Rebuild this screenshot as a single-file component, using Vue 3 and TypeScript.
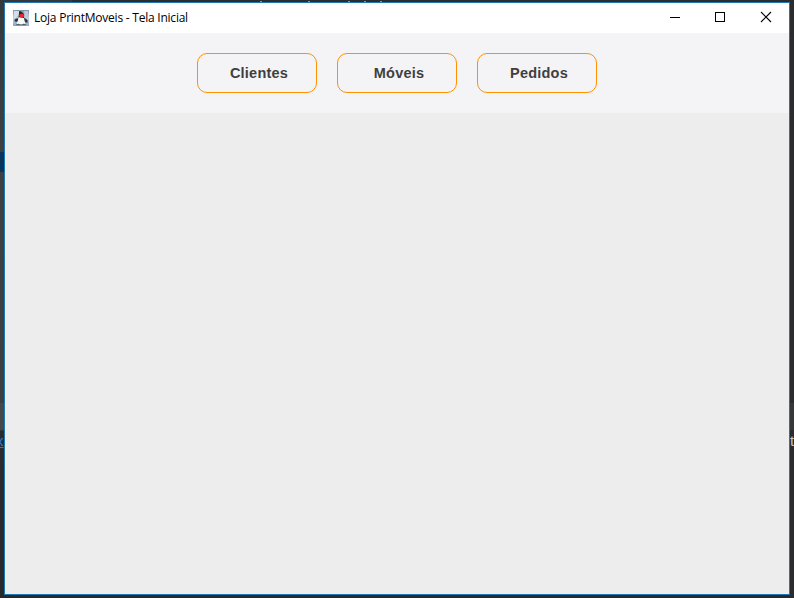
<script setup lang="ts">
import { ref } from 'vue'

const title = 'Loja PrintMoveis - Tela Inicial'
const sections: string[] = ['Clientes', 'Móveis', 'Pedidos']
const active = ref<string | null>(null)
const specks: number[] = [260, 308, 348, 364, 380]
</script>

<template>
  <div class="desktop">
    <i class="strip strip-top-left"></i>
    <i class="strip strip-selected"></i>
    <i class="strip strip-left-bar"></i>
    <i class="strip strip-right-bar"></i>
    <i v-for="x in specks" :key="x" class="speck" :style="{ left: x + 'px' }"></i>
    <span class="behind behind-left">x</span>
    <span class="behind behind-right">t</span>

    <div class="window">
      <header class="titlebar">
        <svg class="app-icon" width="16" height="16" viewBox="0 0 16 16">
          <defs>
            <linearGradient id="tile" x1="0" y1="0" x2="0" y2="1">
              <stop offset="0" stop-color="#7d95a7" />
              <stop offset="0.5" stop-color="#c2d2e0" />
              <stop offset="1" stop-color="#8ba6c0" />
            </linearGradient>
          </defs>
          <rect width="16" height="16" fill="url(#tile)" />
          <path d="M1 1H6V5L2 8H1Z" fill="#d5dee6" />
          <path d="M11 1H15V8L12 7Z" fill="#bccbd8" />
          <path d="M6.2 1L8.2 1.4L10.8 3.8L11.2 8L5.4 8.6L5.8 5Z" fill="#25282b" />
          <path d="M1.6 9.4L3.4 8.6L5.4 8.2L5 11L3.2 12L1.6 11.2ZM10.8 8L13 8.8L14.6 10.4V12.4H12L11 11Z" fill="#303438" />
          <path d="M5.6 7.3L8 7.6L10.8 8L11.8 11.6L12.6 13.8L10.5 13.8L8 14.6L5.5 13.8L3.7 14L4.8 11Z" fill="#f8f9f9" />
          <path d="M3 14.6L5.5 13.8L8 14.8L10.5 13.8L13.3 14.4L13 15.3H3Z" fill="#56616a" />
          <ellipse cx="8.7" cy="5.6" rx="2.5" ry="1.9" fill="#f0252c" />
        </svg>
        <h1 class="title">{{ title }}</h1>
        <div class="controls">
          <button class="control" aria-label="Minimizar">
            <svg width="12" height="12" shape-rendering="crispEdges"><path d="M1 6.5H11" stroke="#000" /></svg>
          </button>
          <button class="control" aria-label="Maximizar">
            <svg width="12" height="12" shape-rendering="crispEdges"><rect x="1.5" y="1.5" width="9" height="9" fill="none" stroke="#000" /></svg>
          </button>
          <button class="control control-close" aria-label="Fechar">
            <svg width="12" height="12"><path d="M1 1L11 11M11 1L1 11" stroke="#000" stroke-width="1.1" /></svg>
          </button>
        </div>
      </header>
      <nav class="menu">
        <button v-for="name in sections" :key="name" class="menu-button" @click="active = name">
          {{ name }}
        </button>
      </nav>
      <main class="content"></main>
    </div>
  </div>
</template>

<style>
body {
  overflow: hidden;
}
</style>

<style scoped>
.desktop {
  position: relative;
  box-sizing: border-box;
  width: 794px;
  height: 598px;
  padding: 2px 4px 3px;
  background: linear-gradient(#36393c 0, #3c4043 150px, #3b3f42 430px, #292b2d 431px, #27292b 100%);
  overflow: hidden;
}
.desktop::after {
  content: '';
  position: absolute;
  top: 0;
  right: 0;
  width: 4px;
  height: 100%;
  background: #2b2c2f;
}
.strip,
.speck {
  position: absolute;
}
.strip-top-left {
  left: 72px;
  top: 0;
  width: 722px;
  height: 2px;
  background: #2b2d2e;
}
.strip-selected {
  left: 0;
  top: 152px;
  width: 4px;
  height: 20px;
  background: #07355c;
}
.strip-left-bar {
  left: 0;
  top: 403px;
  width: 4px;
  height: 27px;
  background: #44484b;
}
.strip-right-bar {
  right: 0;
  top: 403px;
  width: 4px;
  height: 27px;
  z-index: 1;
  background: #35383b;
}
.speck {
  top: 1px;
  width: 2px;
  height: 1px;
  background: #8e9092;
}
.behind {
  position: absolute;
  font: 15px/18px 'Liberation Sans', Arial, sans-serif;
}
.behind-left {
  left: -4px;
  top: 432px;
  color: #287bde;
  text-decoration: underline;
}
.behind-right {
  left: 790px;
  top: 432px;
  z-index: 1;
  color: #c5c5c5;
}
.window {
  position: relative;
  box-sizing: border-box;
  display: flex;
  flex-direction: column;
  width: 786px;
  height: 593px;
  border: 1px solid #1f78b4;
  background: #ededee;
}
.titlebar {
  display: flex;
  align-items: center;
  height: 30px;
  padding-left: 8px;
  background: #fff;
}
.app-icon {
  display: block;
  margin-top: -1px;
}
.title {
  margin: 0 0 0 5px;
  font: 400 12px/16px 'Open Sans', 'Noto Sans', sans-serif;
  letter-spacing: -0.23px;
  color: #000;
  white-space: nowrap;
}
.controls {
  display: flex;
  margin-left: auto;
}
.control {
  display: flex;
  align-items: center;
  justify-content: center;
  width: 45px;
  height: 28px;
  margin: 0 0 2px;
  padding: 0;
  border: 0;
  background: none;
}
.control-close {
  width: 46px;
  margin-left: 1px;
}
.menu {
  box-sizing: border-box;
  display: flex;
  justify-content: center;
  gap: 20px;
  height: 80px;
  padding-top: 20px;
  background: #f4f4f7;
}
.menu-button {
  width: 120px;
  height: 40px;
  padding: 0 0 0 4px;
  border: 1px solid #ff9100;
  border-radius: 10px;
  background: #f4f4f7;
  color: #3f3f40;
  font: bold 14.5px/18px 'Liberation Sans', Arial, sans-serif;
  letter-spacing: 0.22px;
}
.content {
  flex: 1;
  background: #ededee;
}
</style>
